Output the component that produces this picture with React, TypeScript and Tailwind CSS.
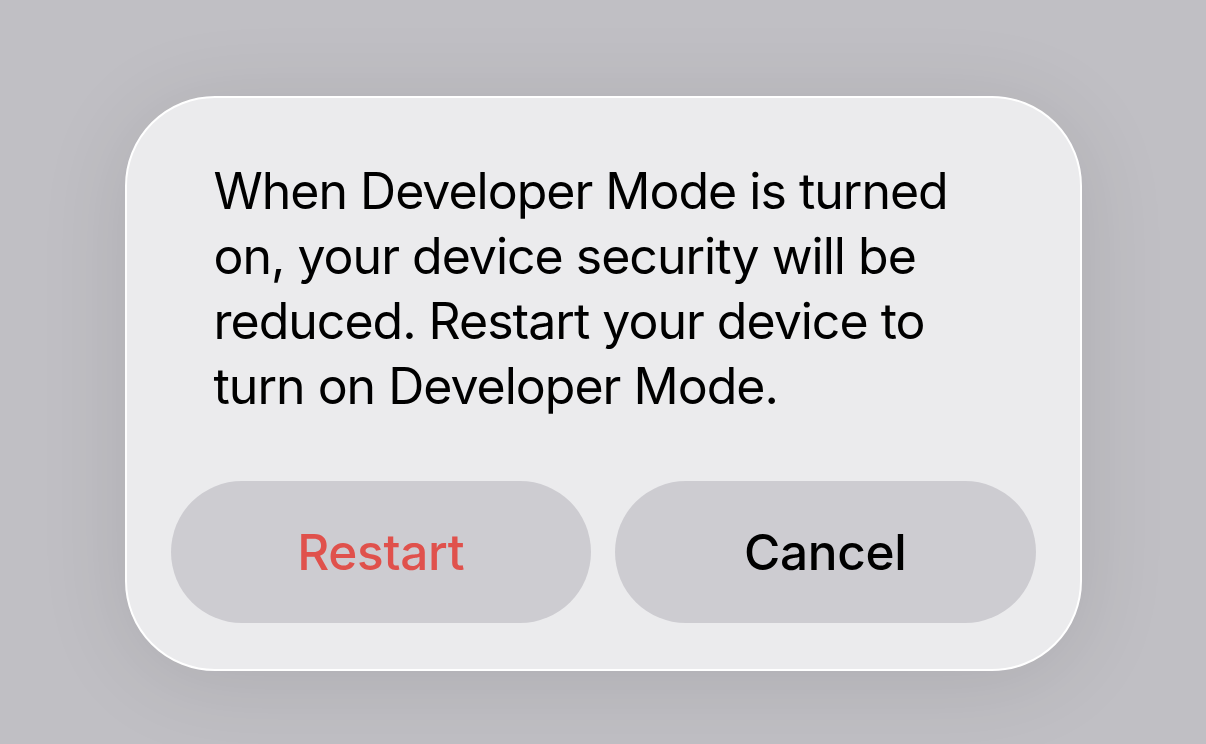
import React from "react";

export default function App() {
  const font = { fontFamily: "Inter, 'Noto Sans', sans-serif" };
  return (
    <div
      className="w-[1206px] h-[744px] bg-[#c0bfc4] flex justify-center pt-[96px] overflow-hidden"
      style={font}
    >
      <div className="w-[957px] h-[575px] rounded-[90px] bg-[#ebebed] border-2 border-white shadow-[0_10px_90px_rgba(0,0,0,0.10)] flex flex-col box-border">
        <div className="pl-[87px] pt-[61px] text-[50px] leading-[65px] text-black tracking-[-1px]">
          <div>When Developer Mode is turned</div>
          <div>on, your device security will be</div>
          <div>reduced. Restart your device to</div>
          <div>turn on Developer Mode.</div>
        </div>
        <div className="mt-auto px-[44px] pb-[46px] flex gap-[24px]">
          <button className="flex-1 h-[142px] rounded-full bg-[#cdccd1] text-[#e0514c] text-[49.5px] font-medium flex items-center justify-center tracking-[-0.3px]">
            Restart
          </button>
          <button className="flex-1 h-[142px] rounded-full bg-[#cdccd1] text-black text-[49.5px] font-medium flex items-center justify-center tracking-[-0.3px]">
            Cancel
          </button>
        </div>
      </div>
    </div>
  );
}
